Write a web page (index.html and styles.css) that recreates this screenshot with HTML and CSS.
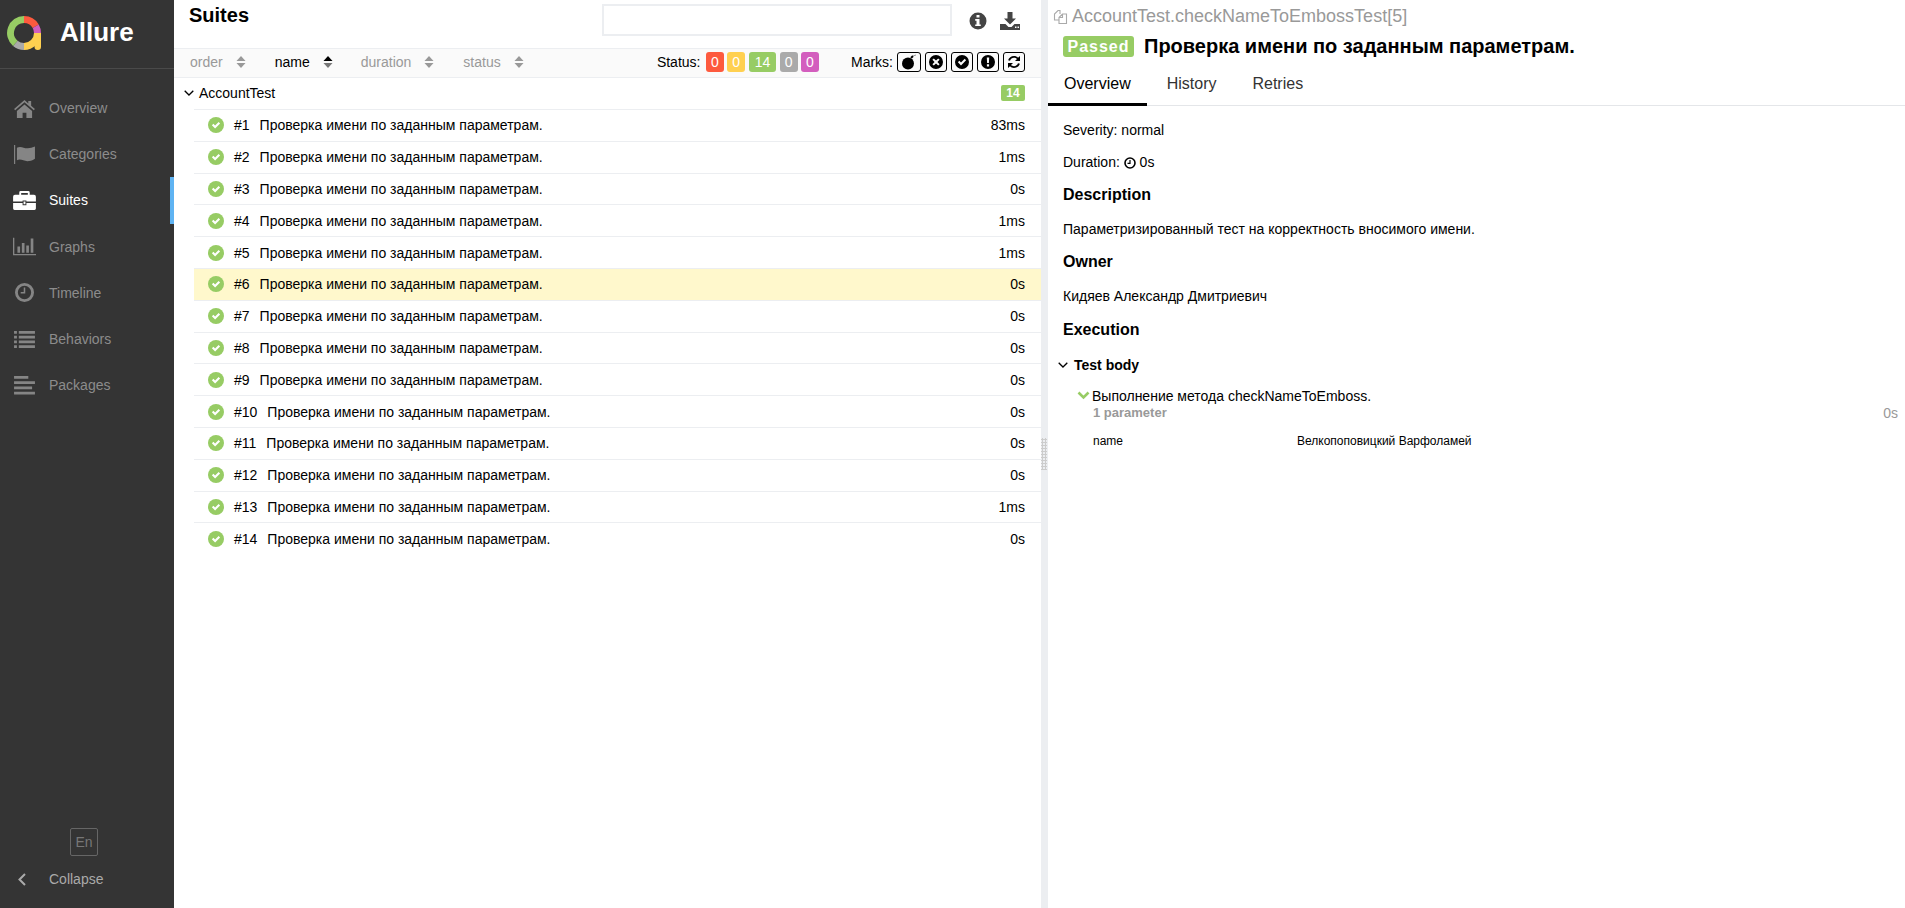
FILE: index.html
```html
<!DOCTYPE html>
<html lang="en">
<head>
    <meta charset="UTF-8">
    <meta name="viewport" content="width=device-width, initial-scale=1.0">
    <title>Allure Report</title>
    <link rel="stylesheet" href="styles.css">
</head>
<body>
    <svg class="sprite" xmlns="http://www.w3.org/2000/svg">
        <symbol id="i-check" viewBox="0 0 16 16">
            <circle cx="8" cy="8" r="8"/>
            <path d="M3.9 8.2l1.5-1.5 1.7 1.7 3.5-3.5 1.5 1.5-5 5z" fill="#fff"/>
        </symbol>
        <symbol id="i-sort" viewBox="0 0 10 12">
            <path d="M5 0l4.500 5h-9z"/>
            <path d="M.5 7h9L5 12z"/>
        </symbol>
        <symbol id="i-sort-up" viewBox="0 0 10 12">
            <path fill="#000" d="M5 0l4.500 5h-9z"/>
            <path fill="#777" d="M.5 7h9L5 12z"/>
        </symbol>
        <symbol id="i-chev" viewBox="0 0 10 6">
            <path d="M.7.7L5 5l4.300-4.300" fill="none" stroke="currentColor" stroke-width="1.300"/>
        </symbol>
    </svg>

    <div class="app">
        <!-- side menu -->
        <aside class="side">
            <div class="brand">
                <svg class="logo" viewBox="0 0 34 34" width="34" height="34">
                    <g fill="none" stroke-width="7">
                        <path d="M17 3.5A13.500 13.500 0 0 1 28.700 10.250" stroke="#fd5a3e"/>
                        <path d="M28.700 10.250A13.500 13.500 0 0 1 30.500 17" stroke="#d35ebe"/>
                        <path d="M30.500 17A13.500 13.500 0 0 1 17 30.500" stroke="#ffd050"/>
                        <path d="M17 30.500A13.500 13.500 0 0 1 8.300 27.300" stroke="#aaa"/>
                        <path d="M8.300 27.300A13.500 13.500 0 0 1 17 3.500" stroke="#97cc64"/>
                    </g>
                    <path d="M27.500 17H34v14a3.250 3 0 0 1-6.500 0z" fill="#ffd050"/>
                </svg>
                <span class="brand-name">Allure</span>
            </div>
            <nav class="menu">
                <a class="menu-item">
                    <svg class="menu-icon" viewBox="0 0 24 20"><path d="M12 1L1 10.500l1.200 1.300L12 3.500l9.800 8.300 1.200-1.300-4-3.400V2h-3v2.800zM4 12.500V20h6v-5.500h4V20h6v-7.500l-8-6.700z"/></svg>
                    <span>Overview</span>
                </a>
                <a class="menu-item">
                    <svg class="menu-icon" viewBox="0 0 24 20"><path d="M1 0h1.200v20H1zM4 3c4-2.500 8 1 11.500 .5 2.500-.3 5-1 7.500-2v13c-3 2-5.500 2.500-8 2.500-4 0-7-3-11-1z"/></svg>
                    <span>Categories</span>
                </a>
                <a class="menu-item active">
                    <svg class="menu-icon" viewBox="0 0 24 20"><path d="M8 0h8a1.500 1.500 0 0 1 1.500 1.500V4H22a2 2 0 0 1 2 2v5H14v-1h-4v1H0V6a2 2 0 0 1 2-2h4.500V1.500A1.500 1.500 0 0 1 8 0zm.5 2v2h7V2zM0 12.500h10V15h4v-2.500h10V18.500a1.500 1.500 0 0 1-1.500 1.500h-21A1.500 1.500 0 0 1 0 18.500zM11 11h2v3h-2z"/></svg>
                    <span>Suites</span>
                </a>
                <a class="menu-item">
                    <svg class="menu-icon" viewBox="0 0 26 20"><path d="M0 0h1.500v18.500H26V20H0zM5 10h3v7H5zM10 6h3v11h-3zM15 9h3v8h-3zM20 1h3v16h-3z"/></svg>
                    <span>Graphs</span>
                </a>
                <a class="menu-item">
                    <svg class="menu-icon" viewBox="0 0 24 20"><path fill-rule="evenodd" d="M12 0a10 10 0 1 1 0 20 10 10 0 0 1 0-20zm0 3a7 7 0 1 0 0 14 7 7 0 0 0 0-14zm-.800 1.800h1.600V11H8v-1.500h3.200z"/></svg>
                    <span>Timeline</span>
                </a>
                <a class="menu-item">
                    <svg class="menu-icon" viewBox="0 0 24 20"><path d="M1 1h3v3H1zM6 1h17v3H6zM1 6h3v3H1zM6 6h17v3H6zM1 11h3v3H1zM6 11h17v3H6zM1 16h3v3H1zM6 16h17v3H6z"/></svg>
                    <span>Behaviors</span>
                </a>
                <a class="menu-item">
                    <svg class="menu-icon" viewBox="0 0 24 20"><path d="M1 0h15v3H1zM1 5.500h22v3H1zM1 11h19v3H1zM1 16.500h22v3H1z"/></svg>
                    <span>Packages</span>
                </a>
            </nav>
            <div class="lang">En</div>
            <a class="collapse">
                <svg class="collapse-icon" viewBox="0 0 8 13" width="8" height="13"><path d="M7 1L1.500 6.500 7 12" fill="none" stroke="currentColor" stroke-width="2"/></svg>
                <span>Collapse</span>
            </a>
        </aside>

        <!-- tree of suites -->
        <section class="tree">
            <header class="tree-head">
                <h2>Suites</h2>
                <input class="search" type="text">
                <svg class="tool-icon info" viewBox="0 0 18 18" width="18" height="18"><path fill-rule="evenodd" d="M9 .5a8.500 8.500 0 1 1 0 17 8.500 8.500 0 0 1 0-17zM7.500 3v2.600h3V3zM6.200 7v1.700h1.300v3.800H6.200V14h5.600v-1.500h-1.300V7z"/></svg>
                <svg class="tool-icon" viewBox="0 0 20 18" width="20" height="18"><path fill-rule="evenodd" d="M7.500 0h5v6.500H16L10 12.500 4 6.500h3.500zM0 12h5.500l3 3h3l3-3H20v6H0zM15 14.500v1.500h1.500v-1.500zM17.500 14.500v1.500H19v-1.500z"/></svg>
            </header>

            <div class="sortbar">
                <span class="sorter">order <svg class="sort-icon" width="10" height="12"><use href="#i-sort"/></svg></span>
                <span class="sorter current">name <svg class="sort-icon" width="10" height="12"><use href="#i-sort-up"/></svg></span>
                <span class="sorter">duration <svg class="sort-icon" width="10" height="12"><use href="#i-sort"/></svg></span>
                <span class="sorter">status <svg class="sort-icon" width="10" height="12"><use href="#i-sort"/></svg></span>
                <div class="filters">
                    <span class="filter-label">Status:</span>
                    <span class="count failed">0</span>
                    <span class="count broken">0</span>
                    <span class="count passed">14</span>
                    <span class="count skipped">0</span>
                    <span class="count unknown">0</span>
                </div>
                <div class="marks">
                    <span class="marks-label">Marks:</span>
                    <span class="mark wide"><svg viewBox="0 0 16 16" width="16" height="16"><circle cx="7" cy="9.500" r="6"/><path d="M10 4l2-2" stroke="#000" stroke-width="2"/><path d="M12 2l3-1" stroke="#999" stroke-width="1"/></svg></span>
                    <span class="mark"><svg viewBox="0 0 14 14" width="14" height="14"><path fill-rule="evenodd" d="M7 0a7 7 0 1 1 0 14A7 7 0 0 1 7 0zM4.800 3.400L3.400 4.800 5.600 7 3.400 9.200l1.400 1.400L7 8.400l2.200 2.200 1.400-1.400L8.400 7l2.200-2.200-1.400-1.400L7 5.600z"/></svg></span>
                    <span class="mark"><svg viewBox="0 0 14 14" width="14" height="14"><path fill-rule="evenodd" d="M7 0a7 7 0 1 1 0 14A7 7 0 0 1 7 0zM2.900 7.200l3.100 3.200 5.100-5.200-1.400-1.400L6 7.500 4.300 5.800z"/></svg></span>
                    <span class="mark"><svg viewBox="0 0 14 14" width="14" height="14"><path fill-rule="evenodd" d="M7 0a7 7 0 1 1 0 14A7 7 0 0 1 7 0zM5.800 2.500l.3 5.500h1.800l.3-5.500zM5.900 9.300v2.200h2.200V9.300z"/></svg></span>
                    <span class="mark"><svg viewBox="0 0 14 14" width="14" height="14"><path d="M7 1c1.600 0 3 .6 4 1.700L13 1v5H8l2-2c-.7-.7-1.900-1.200-3-1.200-1.900 0-3.400 1.200-4 2.900L1.100 5.200C1.900 2.800 4.200 1 7 1zM1 8h5l-2 2c.7.700 1.900 1.200 3 1.200 1.900 0 3.400-1.200 4-2.900l1.900.5C12.100 11.200 9.800 13 7 13c-1.600 0-3-.6-4-1.700L1 13z"/></svg></span>
                </div>
            </div>

            <div class="group">
                <svg class="group-chev" width="10" height="6"><use href="#i-chev"/></svg>
                <span class="group-name">AccountTest</span>
                <span class="group-count">14</span>
            </div>

            <ul class="rows">
                <li class="row"><svg class="ok" width="16" height="16"><use href="#i-check"/></svg><span class="num">#1</span><span class="row-name">Проверка имени по заданным параметрам.</span><span class="time">83ms</span></li>
                <li class="row"><svg class="ok" width="16" height="16"><use href="#i-check"/></svg><span class="num">#2</span><span class="row-name">Проверка имени по заданным параметрам.</span><span class="time">1ms</span></li>
                <li class="row"><svg class="ok" width="16" height="16"><use href="#i-check"/></svg><span class="num">#3</span><span class="row-name">Проверка имени по заданным параметрам.</span><span class="time">0s</span></li>
                <li class="row"><svg class="ok" width="16" height="16"><use href="#i-check"/></svg><span class="num">#4</span><span class="row-name">Проверка имени по заданным параметрам.</span><span class="time">1ms</span></li>
                <li class="row"><svg class="ok" width="16" height="16"><use href="#i-check"/></svg><span class="num">#5</span><span class="row-name">Проверка имени по заданным параметрам.</span><span class="time">1ms</span></li>
                <li class="row selected"><svg class="ok" width="16" height="16"><use href="#i-check"/></svg><span class="num">#6</span><span class="row-name">Проверка имени по заданным параметрам.</span><span class="time">0s</span></li>
                <li class="row"><svg class="ok" width="16" height="16"><use href="#i-check"/></svg><span class="num">#7</span><span class="row-name">Проверка имени по заданным параметрам.</span><span class="time">0s</span></li>
                <li class="row"><svg class="ok" width="16" height="16"><use href="#i-check"/></svg><span class="num">#8</span><span class="row-name">Проверка имени по заданным параметрам.</span><span class="time">0s</span></li>
                <li class="row"><svg class="ok" width="16" height="16"><use href="#i-check"/></svg><span class="num">#9</span><span class="row-name">Проверка имени по заданным параметрам.</span><span class="time">0s</span></li>
                <li class="row"><svg class="ok" width="16" height="16"><use href="#i-check"/></svg><span class="num">#10</span><span class="row-name">Проверка имени по заданным параметрам.</span><span class="time">0s</span></li>
                <li class="row"><svg class="ok" width="16" height="16"><use href="#i-check"/></svg><span class="num">#11</span><span class="row-name">Проверка имени по заданным параметрам.</span><span class="time">0s</span></li>
                <li class="row"><svg class="ok" width="16" height="16"><use href="#i-check"/></svg><span class="num">#12</span><span class="row-name">Проверка имени по заданным параметрам.</span><span class="time">0s</span></li>
                <li class="row"><svg class="ok" width="16" height="16"><use href="#i-check"/></svg><span class="num">#13</span><span class="row-name">Проверка имени по заданным параметрам.</span><span class="time">1ms</span></li>
                <li class="row"><svg class="ok" width="16" height="16"><use href="#i-check"/></svg><span class="num">#14</span><span class="row-name">Проверка имени по заданным параметрам.</span><span class="time">0s</span></li>
            </ul>
        </section>

        <div class="gutter"><span class="grip"></span></div>

        <!-- test result -->
        <section class="detail">
            <div class="path">
                <svg class="copy-icon" viewBox="0 0 15 15" width="15" height="15"><path d="M7 5V1.500H5L1.500 5v6H6M6 8.500L9.500 5h4v9.500H6zM9.500 5v3.500H6" fill="none" stroke="#aaa" stroke-width="1.100"/></svg>
                <span>AccountTest.checkNameToEmbossTest[5]</span>
            </div>
            <div class="title-line">
                <span class="status-badge">Passed</span>
                <h1>Проверка имени по заданным параметрам.</h1>
            </div>
            <div class="tabs">
                <span class="tab active">Overview</span>
                <span class="tab">History</span>
                <span class="tab">Retries</span>
            </div>

            <div class="body">
                <p class="line">Severity: normal</p>
                <p class="line line-duration">Duration: <svg class="clock" viewBox="0 0 12 12" width="12" height="12"><circle cx="6" cy="6" r="5" fill="none" stroke="#000" stroke-width="1.600"/><path d="M6 3v3.300H3.500" fill="none" stroke="#000" stroke-width="1.200"/></svg> 0s</p>
                <h3>Description</h3>
                <p class="line">Параметризированный тест на корректность вносимого имени.</p>
                <h3>Owner</h3>
                <p class="line">Кидяев Александр Дмитриевич</p>
                <h3>Execution</h3>

                <div class="stage">
                    <svg class="stage-chev" width="10" height="6"><use href="#i-chev"/></svg>
                    <span>Test body</span>
                </div>
                <div class="step">
                    <svg class="step-check" viewBox="0 0 12 9" width="13" height="9"><path d="M1 1.500l5 5 5-5" fill="none" stroke="#97cc64" stroke-width="2.600"/></svg>
                    <span>Выполнение метода checkNameToEmboss.</span>
                </div>
                <div class="step-meta">
                    <span class="param-count">1 parameter</span>
                    <span class="step-time">0s</span>
                </div>
                <div class="param">
                    <span class="param-name">name</span>
                    <span>Велкопоповицкий Варфоламей</span>
                </div>
            </div>
        </section>
    </div>
</body>
</html>
```

FILE: styles.css
```css
* {
    margin: 0;
    padding: 0;
    box-sizing: border-box;
}

body {
    font-family: "Liberation Sans", Arial, sans-serif;
    font-size: 14px;
    color: #000;
    background-color: #fff;
    overflow: hidden;
}

.sprite {
    display: none;
}

.app {
    display: flex;
    height: 100vh;
}

/* side menu */
.side {
    width: 174px;
    flex-shrink: 0;
    display: flex;
    flex-direction: column;
    background-color: #343434;
    color: #999;
}

.brand {
    height: 69px;
    display: flex;
    align-items: center;
    padding: 0 0 3px 7px;
    gap: 19px;
    border-bottom: 1px solid #4a4a4a;
}

.brand-name {
    font-size: 26px;
    font-weight: bold;
    color: #fff;
}

.menu {
    flex: 1;
    padding-top: 16px;
}

.menu-item {
    height: 46.2px;
    display: flex;
    align-items: center;
    padding-left: 13px;
    gap: 13px;
    color: #8c8c8c;
}

.menu-item.active {
    color: #fff;
    box-shadow: inset -4px 0 0 #5fb3f2;
}

.menu-icon {
    width: 23px;
    height: 19px;
    fill: #858585;
    flex-shrink: 0;
}

.active .menu-icon {
    fill: #fff;
}

.lang {
    width: 28px;
    height: 28px;
    margin: 0 0 5px 70px;
    border: 1px solid #666;
    border-radius: 2px;
    color: #777;
    text-align: center;
    line-height: 26px;
}

.collapse {
    height: 36px;
    margin-bottom: 11px;
    display: flex;
    align-items: center;
    padding-left: 18px;
    gap: 23px;
    color: #aaa;
}

/* tree panel */
.tree {
    width: 867px;
    flex-shrink: 0;
}

.tree-head {
    height: 48px;
    display: flex;
    align-items: flex-start;
    padding-left: 15px;
}

.tree-head h2 {
    width: 413px;
    font-size: 20px;
    line-height: 30px;
}

.search {
    width: 350px;
    height: 32px;
    margin-top: 4px;
    border: 2px solid #eceef1;
}

.tool-icon {
    margin-top: 12px;
    fill: #444;
}

.info {
    margin-left: 17px;
}

.tool-icon:last-child {
    margin-left: 13px;
}

.sortbar {
    height: 30px;
    display: flex;
    align-items: center;
    padding: 0 0 2px 16px;
    background-color: #fafafa;
    border-top: 1px solid #eceef1;
    border-bottom: 1px solid #eceef1;
}

.sorter {
    color: #999;
    display: flex;
    align-items: center;
    gap: 13px;
    margin-right: 29px;
}

.sorter:nth-child(2) {
    margin-right: 28px;
}

.sort-icon {
    fill: #999;
}

.current {
    color: #000;
}

.filters {
    margin-left: auto;
    display: flex;
    align-items: center;
    gap: 3.4px;
}

.filter-label {
    margin-right: 2px;
}

.count {
    height: 20px;
    min-width: 18px;
    padding: 0 5px;
    border-radius: 3px;
    color: #fff;
    text-align: center;
    line-height: 20px;
    font-size: 14px;
}

.failed { background-color: #fd5a3e; }
.broken { background-color: #ffd050; }
.passed { background-color: #97cc64; padding: 0 6px; }
.skipped { background-color: #aaa; }
.unknown { background-color: #d35ebe; }

.marks {
    margin-left: 32px;
    margin-right: 16px;
    display: flex;
    align-items: center;
    gap: 4px;
}

.mark {
    width: 22px;
    height: 20px;
    display: flex;
    align-items: center;
    justify-content: center;
    border: 1px solid #000;
    border-radius: 3px;
}

.mark.wide {
    width: 24px;
}

.group {
    height: 31px;
    display: flex;
    align-items: center;
    padding: 0 16px 1px 10px;
    font-size: 14px;
}

.group-chev {
    color: #000;
    margin-right: 5px;
}

.group-count {
    margin-left: auto;
    width: 24px;
    height: 16px;
    border-radius: 2px;
    background-color: #97cc64;
    color: #fff;
    font-size: 12px;
    font-weight: bold;
    text-align: center;
    line-height: 16px;
}

.rows {
    list-style: none;
    margin-left: 20px;
}

.row {
    height: 31.8px;
    display: flex;
    align-items: center;
    padding: 0 16px 0 14px;
    border-top: 1px solid #eceef1;
}

.row.selected {
    background-color: #fff8cc;
}

.ok {
    fill: #97cc64;
    margin-right: 10px;
}

.num {
    margin-right: 10px;
}

.time {
    margin-left: auto;
}

/* gutter between panels */
.gutter {
    width: 7px;
    flex-shrink: 0;
    display: flex;
    align-items: center;
    background-color: #eceef1;
}

.grip {
    width: 6px;
    height: 32px;
    background-image: radial-gradient(#ccc 1px, transparent 1.2px);
    background-size: 3px 3px;
}

/* test result panel */
.detail {
    flex: 1;
    min-width: 0;
}

.path {
    height: 30px;
    display: flex;
    align-items: center;
    gap: 4px;
    padding: 2px 0 0 5px;
    font-size: 18px;
    color: #999;
}

.title-line {
    height: 32px;
    display: flex;
    align-items: center;
    gap: 10px;
    padding-left: 15px;
}

.title-line h1 {
    font-size: 20px;
    line-height: 24px;
}

.status-badge {
    width: 71px;
    height: 21px;
    border-radius: 3px;
    background-color: #97cc64;
    color: #fff;
    font-size: 16px;
    font-weight: bold;
    letter-spacing: 1px;
    text-align: center;
    line-height: 21px;
}

.tabs {
    height: 44px;
    display: flex;
    border-bottom: 1px solid #e4e6e9;
    font-size: 16px;
}

.tab {
    padding: 13px 16px 0;
    height: 44px;
    color: #333;
    margin-right: 4px;
}

.tab.active {
    color: #000;
    border-bottom: 3px solid #000;
}

.body {
    padding: 16px 16px 0 15px;
}

.line {
    line-height: 16px;
    margin-bottom: 16.4px;
}

.line-duration {
    margin-bottom: 15.4px;
}

.clock {
    vertical-align: -1.5px;
}

.body h3 {
    font-size: 16px;
    line-height: 18px;
    margin-bottom: 17px;
}

.stage {
    display: flex;
    align-items: center;
    margin: 13px 0 0 -5px;
    height: 18px;
    font-weight: bold;
    font-size: 14px;
    gap: 6px;
}

.step {
    display: flex;
    align-items: center;
    margin: 13px 0 0 14px;
    height: 18px;
    gap: 2px;
}

.step-meta {
    display: flex;
    justify-content: space-between;
    margin: 0 -9px 0 30px;
    height: 16px;
    line-height: 16px;
    color: #999;
}

.param-count {
    font-weight: bold;
    font-size: 13px;
}

.param {
    display: flex;
    margin: 12px 0 0 30px;
    font-size: 12px;
    line-height: 16px;
}

.param-name {
    width: 204px;
}
```
